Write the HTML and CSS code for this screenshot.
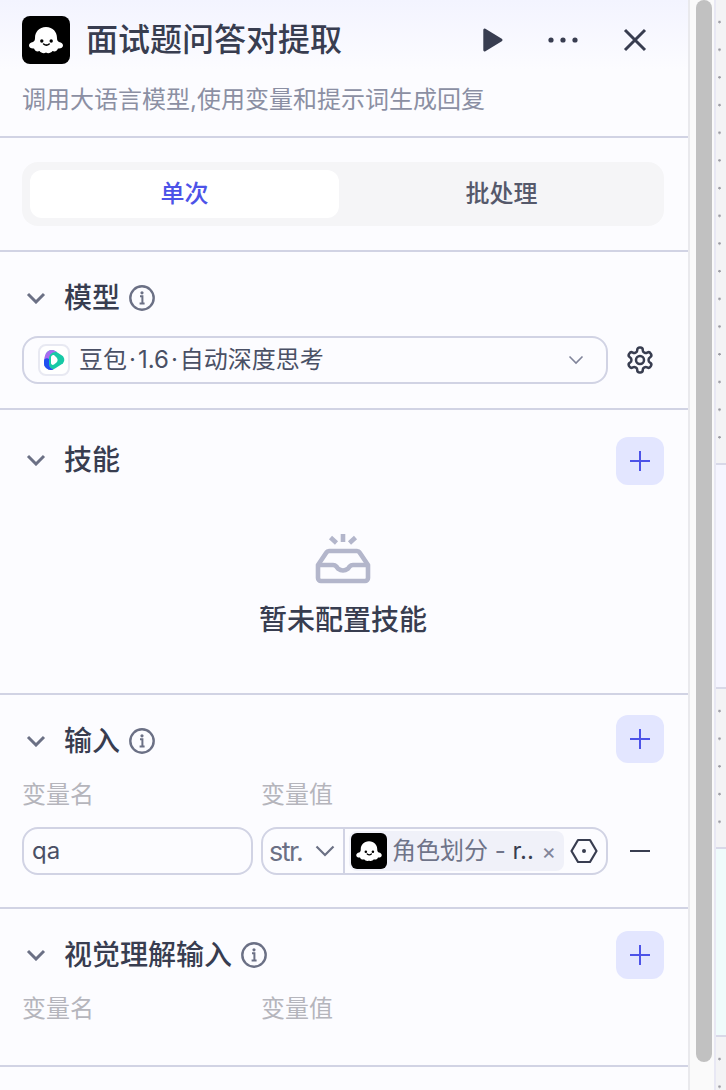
FILE: index.html
```html
<!DOCTYPE html>
<html lang="zh">
<head>
  <meta charset="UTF-8" />
  <title>面试题问答对提取</title>
  <link rel="stylesheet" href="styles.css">
</head>
<body>

<svg class="defs" width="0" height="0">
  <symbol id="ghost" viewBox="0 0 48 48">
    <path fill="#fff" d="M24 11C31 11 35 16 35 22C35 24 35.500 25 37 26C39.500 26.500 41 27.500 41 29.500C41 31.500 38.500 33 36 32.500C35 35 33 36 30.500 35C29 37 26 38 24 36.500C22 38 19 37 17.500 35C15 36 13 35 12 32.500C9.500 33 7 31.500 7 29.500C7 27.500 8.500 26.500 11 26C12.500 25 13 24 13 22C13 16 17 11 24 11Z"/>
    <circle cx="19.800" cy="25" r="1.700" fill="#000"/>
    <circle cx="29.200" cy="25" r="1.700" fill="#000"/>
    <path d="M21.600 28q2.800 2.400 5.600 0" fill="none" stroke="#000" stroke-width="1.600" stroke-linecap="round"/>
  </symbol>
  <symbol id="chevron" viewBox="0 0 20 12">
    <path d="M2 2l8 8 8-8" fill="none" stroke="#6b7085" stroke-width="3"/>
  </symbol>
  <symbol id="info" viewBox="0 0 26 26">
    <circle cx="13" cy="13" r="11.700" fill="none" stroke="#6b7085" stroke-width="2.400"/>
    <circle cx="13" cy="7.800" r="1.600" fill="#6b7085"/>
    <path d="M11 11.200h2.400v7M10.600 18.400h5" fill="none" stroke="#6b7085" stroke-width="2"/>
  </symbol>
  <symbol id="plus" viewBox="0 0 20 20">
    <path d="M0 10h20M10 0v20" fill="none" stroke="#4d53e8" stroke-width="2"/>
  </symbol>
</svg>

<div class="app">
  <div class="panel">

    <header class="top">
      <div class="top-row">
        <svg class="node-icon" width="48" height="48"><use href="#ghost"/></svg>
        <h1 class="title">面试题问答对提取</h1>
        <svg class="play" width="20" height="24" viewBox="0 0 20 24"><path d="M2.400 0.700L18.800 10.800a1.400 1.400 0 0 1 0 2.400L2.400 23.300A1.400 1.400 0 0 1 0.300 22V2A1.400 1.400 0 0 1 2.400 0.700Z" fill="#383d50"/></svg>
        <svg class="more" width="30" height="6" viewBox="0 0 30 6"><circle cx="3" cy="3" r="2.600" fill="#383d50"/><circle cx="15" cy="3" r="2.600" fill="#383d50"/><circle cx="27" cy="3" r="2.600" fill="#383d50"/></svg>
        <svg class="close" width="24" height="24" viewBox="0 0 24 24"><path d="M2 2l20 20M22 2L2 22" fill="none" stroke="#383d50" stroke-width="3"/></svg>
      </div>
      <p class="desc">调用大语言模型,使用变量和提示词生成回复</p>
    </header>

    <section class="tabs-wrap">
      <div class="tabs">
        <div class="tab active">单次</div>
        <div class="tab">批处理</div>
      </div>
    </section>

    <section class="section model">
      <div class="sec-head">
        <svg class="chev" width="20" height="12"><use href="#chevron"/></svg>
        <span class="sec-title">模型</span>
        <svg class="info" width="26" height="26"><use href="#info"/></svg>
      </div>
      <div class="model-row">
        <div class="select">
          <span class="logo-box">
            <svg width="24" height="24" viewBox="0 0 24 24">
              <path d="M4 5.500C6 2 10 1 13.500 3.200L20 7.500C23 9.500 23 14 20 16L13 20.500C8 23.500 2 20.500 2 15Z" fill="#17c9a6"/>
              <path d="M4 5.500C6 2 10 1 13.500 3.200L15 4.200C10 3.500 7 7 7 11L7 16.500C7 19 9 21 11.500 21.400C7.500 23 2 20.500 2 15C2 11 2.500 8 4 5.500Z" fill="#a86bf0"/>
              <path d="M2 13C2 11 4 10 6 10.500L7 11V16.500C7 19 9 21 11.500 21.400C7.500 23 2 20.500 2 15Z" fill="#1f4ff0"/>
              <path d="M9 9.500C9 7.500 11 6.500 12.500 7.500L14.500 9.500C16 11 16 13 14.500 14.500L12 16.500C10.500 17.500 9 16.500 9 15Z" fill="#fff"/>
            </svg>
          </span>
          <span class="select-text">豆包<span class="dot">·</span>1.6<span class="dot">·</span>自动深度思考</span>
          <svg class="select-caret" width="16" height="10" viewBox="0 0 16 10"><path d="M1.500 1.500L8 8l6.500-6.500" fill="none" stroke="#80849a" stroke-width="1.600"/></svg>
        </div>
        <svg class="gear" width="30" height="30" viewBox="0 0 24 24" fill="none" stroke="#383d50" stroke-width="2">
          <path d="M12.220 2h-.44a2 2 0 0 0-2 2v.18a2 2 0 0 1-1 1.730l-.43.25a2 2 0 0 1-2 0l-.15-.08a2 2 0 0 0-2.730.73l-.22.38a2 2 0 0 0 .73 2.730l.15.1a2 2 0 0 1 1 1.720v.51a2 2 0 0 1-1 1.740l-.15.09a2 2 0 0 0-.73 2.730l.22.38a2 2 0 0 0 2.730.73l.15-.08a2 2 0 0 1 2 0l.43.25a2 2 0 0 1 1 1.730V20a2 2 0 0 0 2 2h.44a2 2 0 0 0 2-2v-.18a2 2 0 0 1 1-1.730l.43-.25a2 2 0 0 1 2 0l.15.08a2 2 0 0 0 2.730-.73l.22-.39a2 2 0 0 0-.73-2.730l-.15-.08a2 2 0 0 1-1-1.740v-.5a2 2 0 0 1 1-1.740l.15-.09a2 2 0 0 0 .73-2.730l-.22-.38a2 2 0 0 0-2.730-.73l-.15.08a2 2 0 0 1-2 0l-.43-.25a2 2 0 0 1-1-1.730V4a2 2 0 0 0-2-2z"/>
          <circle cx="12" cy="12" r="3.200"/>
        </svg>
      </div>
    </section>

    <section class="section skill">
      <div class="sec-head">
        <svg class="chev" width="20" height="12"><use href="#chevron"/></svg>
        <span class="sec-title">技能</span>
        <button class="add"><svg width="20" height="20"><use href="#plus"/></svg></button>
      </div>
      <div class="empty">
        <svg width="56" height="52" viewBox="0 0 56 52">
          <path d="M28 1v8M15.500 4.500l6 5.500M40.500 4.500l-6 5.500" fill="none" stroke="#b3b6cb" stroke-width="4.600"/>
          <path d="M14 18h28a3 3 0 0 1 2.600 1.500L53 32v13a3 3 0 0 1-3 3H6a3 3 0 0 1-3-3V32l8.400-12.500A3 3 0 0 1 14 18Z" fill="none" stroke="#b3b6cb" stroke-width="4.600" stroke-linejoin="round"/>
          <path d="M3 32h15q2 0 3.400 1.600l1.600 2q5 3.800 10 0l1.600-2Q36 32 38 32h15" fill="none" stroke="#b3b6cb" stroke-width="4.600"/>
        </svg>
        <div class="empty-text">暂未配置技能</div>
      </div>
    </section>

    <section class="section inputs">
      <div class="sec-head">
        <svg class="chev" width="20" height="12"><use href="#chevron"/></svg>
        <span class="sec-title">输入</span>
        <svg class="info" width="26" height="26"><use href="#info"/></svg>
        <button class="add"><svg width="20" height="20"><use href="#plus"/></svg></button>
      </div>
      <div class="var-labels">
        <span>变量名</span>
        <span>变量值</span>
      </div>
      <div class="var-row">
        <div class="name-box">qa</div>
        <div class="value-box">
          <div class="type">
            <span class="type-name">str.</span>
            <svg width="20" height="12" viewBox="0 0 20 12"><path d="M1.500 1.500L10 10l8.500-8.500" fill="none" stroke="#6b7085" stroke-width="2.200"/></svg>
          </div>
          <div class="tag">
            <svg class="tag-icon" width="36" height="36"><use href="#ghost"/></svg>
            <span class="tag-text">角色划分 - <b>r..</b></span>
            <span class="tag-x">×</span>
          </div>
          <svg class="hex" width="28" height="26" viewBox="0 0 28 26"><path d="M8 2h12l6.500 11L20 24H8L1.500 13Z" fill="none" stroke="#383d50" stroke-width="2.200" stroke-linejoin="round"/><circle cx="14" cy="13" r="2" fill="#383d50"/></svg>
        </div>
        <svg class="minus" width="20" height="2"><rect width="20" height="2" fill="#383d50"/></svg>
      </div>
    </section>

    <section class="section vision">
      <div class="sec-head">
        <svg class="chev" width="20" height="12"><use href="#chevron"/></svg>
        <span class="sec-title">视觉理解输入</span>
        <svg class="info" width="26" height="26"><use href="#info"/></svg>
        <button class="add"><svg width="20" height="20"><use href="#plus"/></svg></button>
      </div>
      <div class="var-labels">
        <span>变量名</span>
        <span>变量值</span>
      </div>
    </section>

  </div>

  <div class="scrollbar"><div class="thumb"></div></div>

  <div class="canvas">
    <div class="block grey b1"></div>
    <div class="block lavender b2"></div>
    <div class="block grey b3"></div>
    <div class="block cyan b4"></div>
    <div class="block grey b5"></div>
  </div>
</div>

</body>
</html>
```

FILE: styles.css
```css
* {
  box-sizing: border-box;
}
html, body {
  margin: 0;
  height: 1090px;
  overflow: hidden;
}
body {
  font-family: Inter, "Noto Sans CJK SC", sans-serif;
  color: #383d50;
  background: #fcfcff;
}
.defs {
  position: absolute;
}
.app {
  display: flex;
  height: 1090px;
}

/* left panel */
.panel {
  width: 690px;
  flex: none;
  background: #fcfcff;
  border-right: 2px solid #e9e9ed;
}
.top {
  height: 138px;
  padding: 16px 24px 0 22px;
  background: linear-gradient(#f3f4ff, #fcfcff 70px);
  border-bottom: 2px solid #d1d3e4;
}
.top-row {
  display: flex;
  align-items: center;
  height: 48px;
}
.node-icon {
  background: #000;
  border-radius: 8px;
  flex: none;
}
.title {
  margin: 0 0 0 16px;
  font-size: 32px;
  line-height: 48px;
  font-weight: 500;
  color: #383d50;
  flex: 1;
}
.play {
  margin-right: 45px;
}
.more {
  margin-right: 45px;
}
.close {
  margin-right: 17px;
}
.desc {
  margin: 18px 0 0;
  font-size: 24px;
  line-height: 36px;
  color: #8b8fa3;
}
.tabs-wrap {
  height: 114px;
  padding: 24px 24px 0 22px;
  border-bottom: 2px solid #d1d3e4;
}
.tabs {
  display: flex;
  gap: 8px;
  height: 64px;
  padding: 8px;
  background: #f5f5f7;
  border-radius: 16px;
}
.tab {
  flex: 1;
  border-radius: 12px;
  text-align: center;
  font-size: 24px;
  line-height: 48px;
  font-weight: 500;
  color: #55596b;
}
.tab.active {
  background: #fff;
  color: #4d53e8;
}

/* sections */
.section {
  padding: 22px 24px 0 22px;
  border-bottom: 2px solid #d1d3e4;
}
.model {
  height: 158px;
}
.skill {
  height: 285px;
  padding-top: 27px;
}
.inputs {
  height: 214px;
  padding-top: 20px;
}
.vision {
  height: 158px;
}
.sec-head {
  display: flex;
  align-items: center;
  height: 48px;
}
.chev {
  margin-left: 4px;
  flex: none;
}
.sec-title {
  margin-left: 18px;
  font-size: 28px;
  line-height: 48px;
  font-weight: 500;
  color: #383d50;
}
.skill .sec-title,
.skill .chev {
  margin-bottom: 2px;
}
.inputs .sec-title,
.inputs .chev,
.inputs .info {
  margin-top: 4px;
}
.info {
  margin-left: 9px;
}
.add {
  margin-left: auto;
  width: 48px;
  height: 48px;
  padding: 0;
  border: none;
  border-radius: 12px;
  background: #e3e6ff;
  display: flex;
  align-items: center;
  justify-content: center;
}

/* model select */
.model-row {
  display: flex;
  align-items: center;
  margin-top: 14px;
}
.select {
  width: 586px;
  height: 48px;
  display: flex;
  align-items: center;
  border: 2px solid #d1d3e4;
  border-radius: 16px;
  padding: 0 22px 0 14px;
}
.logo-box {
  width: 32px;
  height: 32px;
  border: 2px solid #e8e9f2;
  border-radius: 8px;
  background: #fff;
  display: flex;
  align-items: center;
  justify-content: center;
}
.select-text {
  margin-left: 9px;
  font-size: 24px;
  line-height: 36px;
  color: #4a5065;
  flex: 1;
  margin-bottom: 1px;
}
.dot {
  margin: 0 2px;
}
.gear {
  margin-left: 17px;
}

/* empty skills */
.empty {
  margin-top: 48px;
  text-align: center;
}
.empty svg {
  display: block;
  margin: 0 auto;
}
.empty-text {
  margin-top: 14px;
  font-size: 28px;
  line-height: 42px;
  font-weight: 500;
  color: #383d50;
}

/* variables */
.var-labels {
  display: grid;
  grid-template-columns: 239px 1fr;
  font-size: 24px;
  line-height: 36px;
  color: #b5b5bc;
  margin-top: 14px;
}
.vision .var-labels {
  margin-top: 12px;
}
.var-row {
  display: flex;
  align-items: center;
  margin-top: 14px;
}
.name-box {
  width: 231px;
  height: 48px;
  border: 2px solid #d1d3e4;
  border-radius: 16px;
  padding-left: 8px;
  font-size: 24px;
  line-height: 44px;
  color: #4a5065;
}
.value-box {
  width: 347px;
  height: 48px;
  margin-left: 8px;
  border: 2px solid #d1d3e4;
  border-radius: 16px;
  display: flex;
  align-items: center;
}
.type {
  width: 82px;
  height: 44px;
  flex: none;
  border-right: 2px solid #d1d3e4;
  padding-left: 6px;
  display: flex;
  align-items: center;
  gap: 13px;
}
.type-name {
  font-size: 27px;
  letter-spacing: -1.500px;
  color: #6b7085;
}
.tag {
  margin-left: 4px;
  width: 215px;
  height: 40px;
  border-radius: 8px;
  background: #f0f1f9;
  display: flex;
  align-items: center;
  padding-left: 2px;
  flex: none;
}
.tag-icon {
  background: #000;
  border-radius: 6px;
  flex: none;
}
.tag-text {
  margin-left: 5px;
  font-size: 24px;
  line-height: 36px;
  color: #6f7489;
  white-space: nowrap;
}
.tag-text b {
  font-weight: 400;
  color: #383d50;
}
.tag-x {
  margin-left: auto;
  margin-right: 8px;
  font-size: 22px;
  color: #80849a;
}
.hex {
  margin-left: 6px;
}
.minus {
  margin-left: 22px;
}

/* scrollbar */
.scrollbar {
  width: 26px;
  flex: none;
  padding: 0 4px 0 6px;
  background: #fafafa;
  border-right: 2px solid #e8e8f4;
}
.thumb {
  width: 16px;
  height: 1062px;
  background: #c1c1c1;
  border-radius: 8px;
}

/* canvas behind the panel */
.canvas {
  flex: 1;
  display: flex;
  flex-direction: column;
  background: #f3f3f5;
}
.block {
  border-bottom: 2px solid #d8d9e8;
}
.grey {
  background-color: #f3f3f5;
  background-image: radial-gradient(circle at 3.500px 22px, #9b9ba3 1px, transparent 1.500px);
  background-size: 100% 27.700px;
  background-repeat: repeat-y;
}
.lavender {
  background: #f5f5ff;
}
.cyan {
  background: #effbfb;
}
.b1 {
  height: 465px;
}
.b2 {
  height: 224px;
}
.b3 {
  height: 160px;
}
.b4 {
  height: 188px;
}
.b5 {
  flex: 1;
  border-bottom: none;
}
```
